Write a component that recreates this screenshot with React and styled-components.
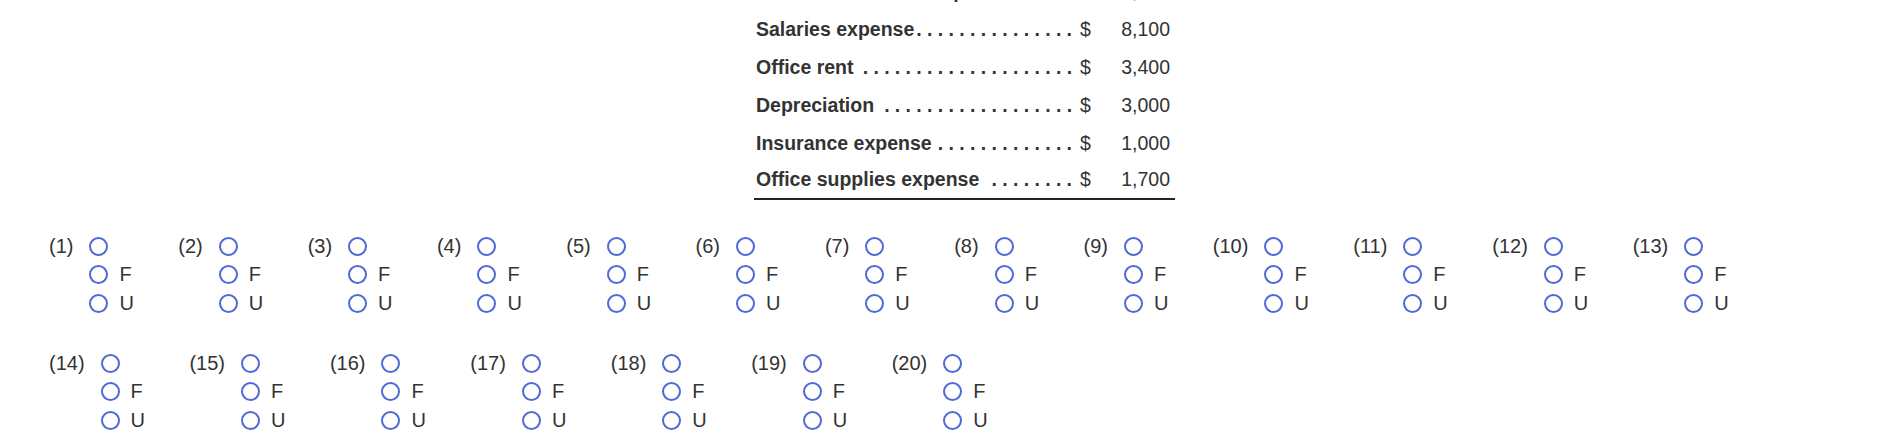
import React from "react";
import styled, { createGlobalStyle } from "styled-components";

const expenses = [
  { label: "Sales commission expense", amount: "7,000", dots: 6 },
  { label: "Salaries expense", amount: "8,100", dots: 15 },
  { label: "Office rent", amount: "3,400", dots: 20 },
  { label: "Depreciation", amount: "3,000", dots: 18 },
  { label: "Insurance expense", amount: "1,000", dots: 13 },
  { label: "Office supplies expense", amount: "1,700", dots: 8 },
];

// question numbers, split in the two rows they sit in
const blocks = [
  Array.from({ length: 13 }, (_, i) => i + 1),
  Array.from({ length: 7 }, (_, i) => i + 14),
];

const App = () => {
  return (
    <Page>
      <GlobalStyle />
      <ExpenseTable>
        {expenses.map((row, index) => (
          <ExpenseRow key={row.label} last={index === expenses.length - 1}>
            <LabelCell>
              <span>{row.label}</span>
              <Leader>{Array(row.dots).fill(".").join(" ")}</Leader>
            </LabelCell>
            <Dollar>$</Dollar>
            <Amount>{row.amount}</Amount>
          </ExpenseRow>
        ))}
      </ExpenseTable>

      {blocks.map((block, b) => (
        <Block key={b}>
          {block.map((n) => (
            <Question key={n}>
              <QLabel>({n})</QLabel>
              <Options>
                {["", "F", "U"].map((opt) => (
                  <Option key={opt || "blank"}>
                    <Radio />
                    {opt && <span>{opt}</span>}
                  </Option>
                ))}
              </Options>
            </Question>
          ))}
        </Block>
      ))}
    </Page>
  );
};

export default App;

// Styled Components
const GlobalStyle = createGlobalStyle`
  html, body {
    margin: 0;
    padding: 0;
    background: #ffffff;
  }
  body {
    font-family: "Liberation Sans", Arial, sans-serif;
    color: #333333;
  }
`;

const Page = styled.div`
  width: 1880px;
  height: 442px;
  overflow: hidden;
`;

const ExpenseTable = styled.div`
  width: 421px;
  margin: -27px 0 0 754px;
  font-size: 19.5px;
`;

const ExpenseRow = styled.div`
  display: grid;
  grid-template-columns: 318px 26px 1fr;
  align-items: center;
  height: 37.8px;
  box-sizing: border-box;
  border-bottom: ${(p) => (p.last ? "2px solid #222222" : "none")};
`;

const LabelCell = styled.div`
  display: flex;
  padding-left: 2px;
  font-weight: bold;
  white-space: nowrap;
  overflow: hidden;
`;

const Leader = styled.span`
  flex: 1;
  min-width: 0;
  overflow: hidden;
  direction: rtl;
  letter-spacing: -0.05px;
`;

const Dollar = styled.div`
  padding-left: 8px;
`;

const Amount = styled.div`
  text-align: right;
  padding-right: 5px;
`;

const Block = styled.div`
  display: flex;
  gap: 44.4px;
  padding-left: 49px;
  margin-top: 32px;

  & + & {
    margin-top: 31.5px;
  }
`;

const Question = styled.div`
  display: flex;
  flex-shrink: 0;
  font-size: 20px;
`;

const QLabel = styled.div`
  line-height: 28.5px;
  margin-right: 16px;
`;

const Options = styled.div`
  display: flex;
  flex-direction: column;
`;

const Option = styled.div`
  display: flex;
  align-items: center;
  gap: 11px;
  height: 28.5px;
`;

const Radio = styled.span`
  display: inline-block;
  width: 19px;
  height: 19px;
  box-sizing: border-box;
  border: 2px solid #5169d6;
  border-radius: 50%;
`;
